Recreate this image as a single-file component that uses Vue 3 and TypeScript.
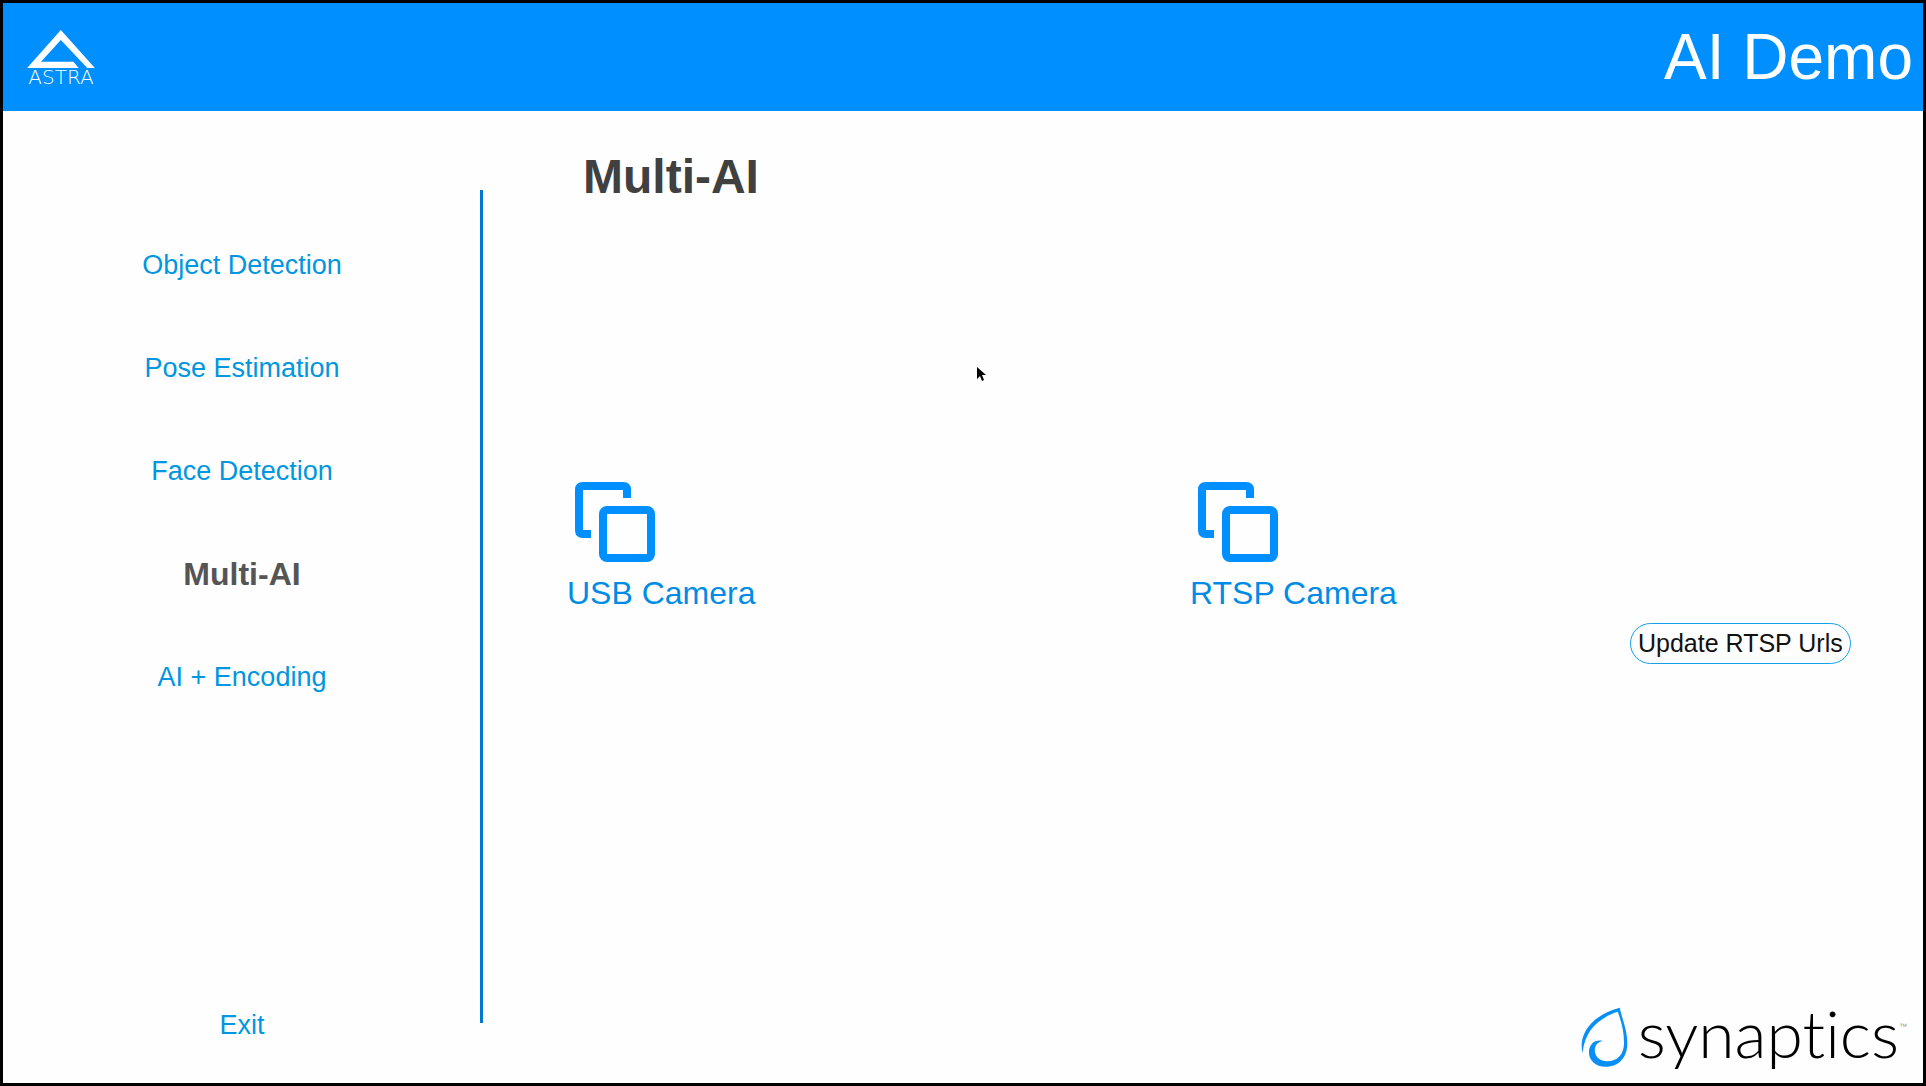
<script setup lang="ts">
import { ref } from 'vue'

const pages: string[] = [
  'Object Detection',
  'Pose Estimation',
  'Face Detection',
  'Multi-AI',
  'AI + Encoding',
]
const current = ref<string>('Multi-AI')
const sources: string[] = ['USB Camera', 'RTSP Camera']
</script>

<template>
  <div class="app">
    <header class="topbar">
      <div class="astra">
        <svg class="astra-mark" viewBox="80 92 205 115" aria-hidden="true">
          <path d="M182 92 80 207H236L220 188H122L182 122 262 207H285Z" fill="#fff" />
        </svg>
        <span class="astra-name">ASTRA</span>
      </div>
      <span class="product">AI Demo</span>
    </header>

    <div class="body">
      <nav class="menu">
        <button
          v-for="page in pages"
          :key="page"
          type="button"
          class="menu-item"
          :class="{ active: page === current }"
          @click="current = page"
        >
          {{ page }}
        </button>
        <button type="button" class="menu-item exit">Exit</button>
      </nav>
      <div class="divider"></div>

      <main class="content">
        <h1 class="title">{{ current }}</h1>
        <div class="sources">
          <button v-for="source in sources" :key="source" type="button" class="source">
            <svg class="source-icon" viewBox="0 0 80 80" fill="none" stroke="#008fff" stroke-width="8" aria-hidden="true">
              <path d="M52 16V8Q52 4 48 4H8Q4 4 4 8V48Q4 52 8 52H16" />
              <rect x="28" y="28" width="48" height="48" rx="4" />
            </svg>
            <span>{{ source }}</span>
          </button>
          <button type="button" class="update">Update RTSP Urls</button>
        </div>

        <footer class="brand">
          <svg class="brand-drop" viewBox="57 51 142 180" aria-hidden="true">
            <path
              fill="#0a90f5"
              d="M174 53C181 85 197 120 197 160C197 204 170 231 132 231C100 231 81 211 81 187C81 162 100 147 123 153C104 156 98 171 99 184C101 203 116 214 136 214C166 214 187 195 187 158C187 122 178 92 168 65C110 84 68 122 62 189C50 150 70 81 174 53Z"
            />
          </svg>
          <span class="brand-name">synaptics</span>
          <span class="brand-tm">™</span>
        </footer>
      </main>
    </div>

    <svg class="pointer" viewBox="0 0 9 15" aria-hidden="true">
      <path d="M0 0V12L3 9 5 14 7 13 5 8H9Z" fill="#000" />
    </svg>
  </div>
</template>

<style>
body {
  margin: 0;
}
</style>

<style scoped>
.app {
  position: relative;
  box-sizing: border-box;
  min-height: 100vh;
  display: flex;
  flex-direction: column;
  border: 3px solid #000;
  background: #fefefe;
  font-family: "Liberation Sans", Arial, sans-serif;
}

button {
  margin: 0;
  padding: 0;
  border: 0;
  background: none;
  font-family: inherit;
  cursor: pointer;
}

.topbar {
  display: flex;
  align-items: center;
  justify-content: space-between;
  height: 108px;
  padding: 0 10px;
  background: #008fff;
  color: #fff;
}

.astra {
  display: flex;
  flex-direction: column;
  align-items: center;
  width: 96px;
  padding-top: 2px;
}

.astra-mark {
  width: 68px;
  height: 38px;
}

.astra-name {
  font-family: "DejaVu Sans", sans-serif;
  font-weight: 200;
  font-size: 20px;
  line-height: 18px;
}

.product {
  font-size: 64px;
  line-height: 72px;
}

.body {
  flex: 1;
  display: flex;
}

.menu {
  box-sizing: border-box;
  width: 25%;
  display: flex;
  flex-direction: column;
  align-items: center;
  gap: 71px;
  padding: 138px 2px 42px 0;
}

.menu-item {
  color: #0096e0;
  font-size: 27px;
  line-height: 32px;
}

.menu-item.active {
  color: #555;
  font-size: 32px;
  font-weight: bold;
}

.exit {
  margin-top: auto;
}

.divider {
  width: 3px;
  margin: 79px 0 60px -3px;
  background: #0078cc;
}

.content {
  flex: 1;
  display: flex;
  flex-direction: column;
  padding: 38px 0 16px 84px;
}

.title {
  margin: 0 0 277px 16px;
  color: #404040;
  font-size: 48px;
  line-height: 56px;
}

.sources {
  display: grid;
  grid-template-columns: 623fr 440fr 293fr;
  align-items: start;
  justify-items: start;
}

.source {
  display: flex;
  flex-direction: column;
  align-items: flex-start;
  gap: 13px;
  color: #008ce6;
  font-size: 32px;
  line-height: 36px;
}

.source-icon {
  width: 80px;
  height: 80px;
  margin-left: 8px;
}

.update {
  margin-top: 141px;
  padding: 0 7px;
  border: 1px solid #12a0e8;
  border-radius: 21px;
  color: #111;
  font-size: 25px;
  line-height: 39px;
}

.brand {
  display: flex;
  align-items: flex-start;
  margin-top: auto;
  justify-content: flex-end;
  padding-right: 16px;
}

.brand-drop {
  width: 47px;
  height: 60px;
  margin-right: 10px;
}

.brand-name {
  color: #000;
  font-family: Lato, sans-serif;
  font-weight: 300;
  font-size: 66px;
  font-variant-ligatures: none;
  line-height: 52px;
}

.brand-tm {
  color: #999;
  font-size: 8px;
  line-height: 40px;
}

.pointer {
  position: absolute;
  left: 974px;
  top: 364px;
  width: 9px;
  height: 15px;
}
</style>
